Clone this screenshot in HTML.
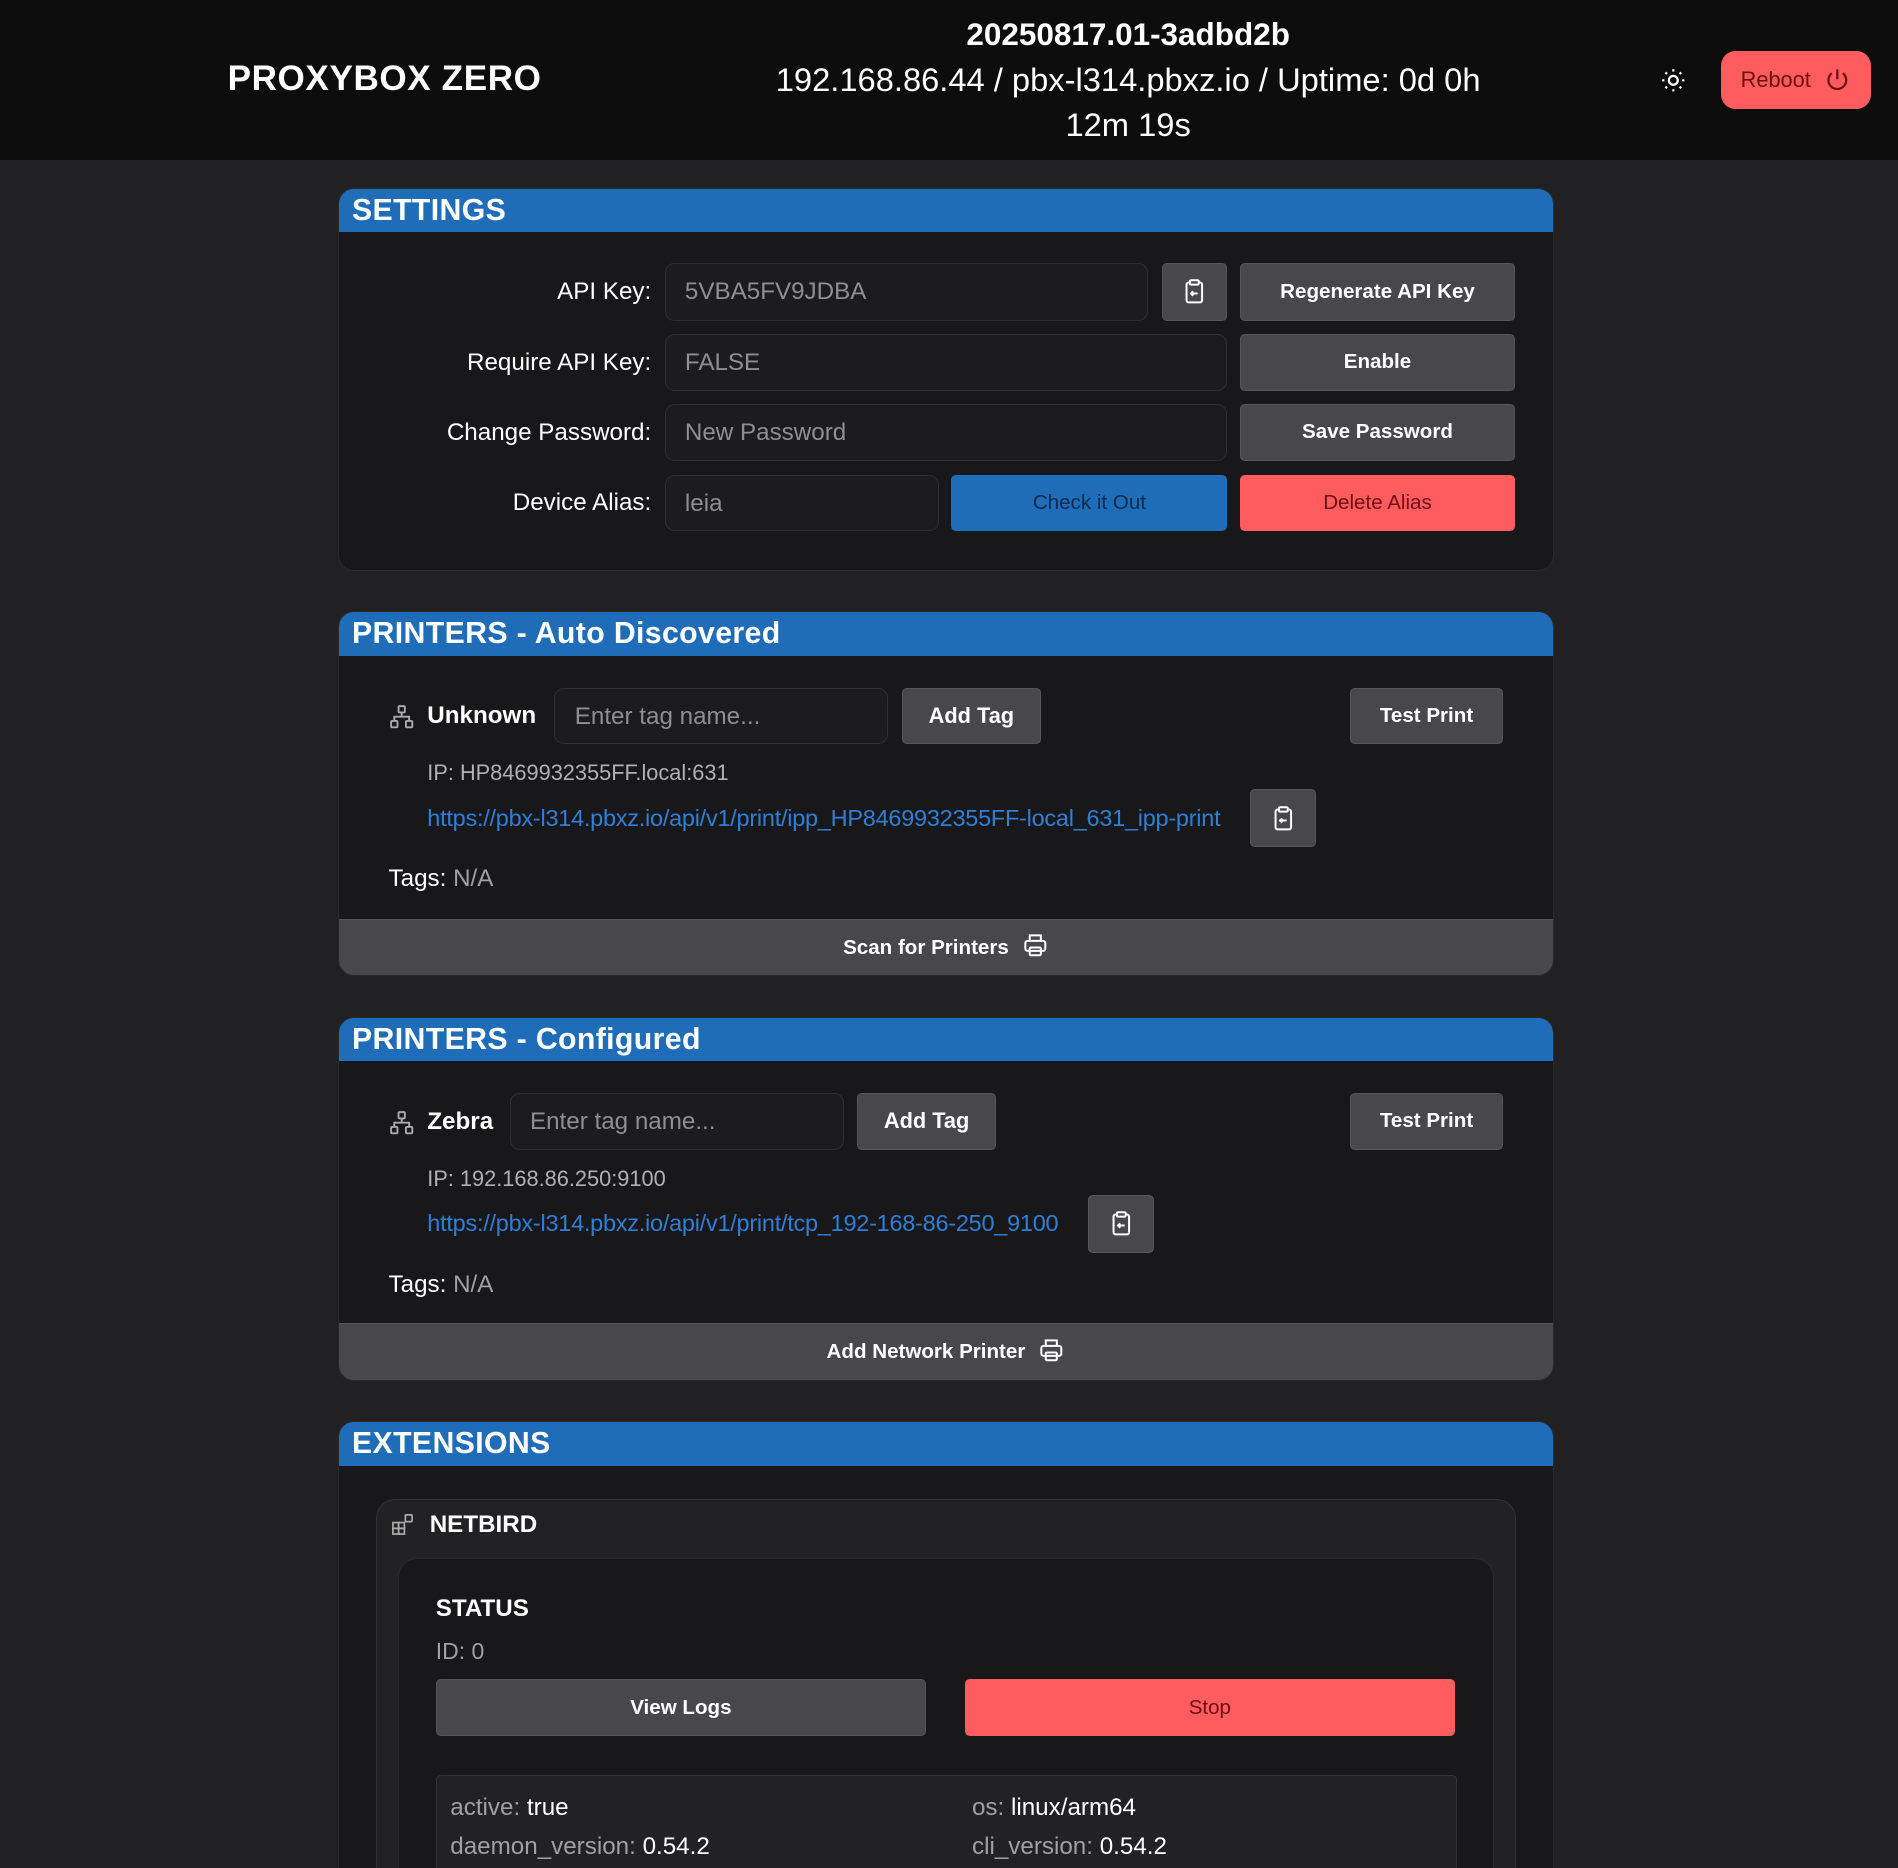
<!DOCTYPE html>
<html><head><meta charset="utf-8"><style>
html,body{margin:0;padding:0;background:#212123;width:1898px;height:1868px;overflow:hidden}
#w{zoom:1.21046;width:1568px;height:1543px;position:relative;font-family:"Liberation Sans",sans-serif;color:#fff}
.a{position:absolute}
.hdr{left:0;top:0;width:1568px;height:132px;background:#0d0d0d}
.c{text-align:center}
.card{left:279px;width:1003px;background:#18181a;border:1px solid #2a2a2d;border-radius:13px;overflow:hidden}
.ch{left:0;top:0;width:100%;height:36px;background:#1f6db8;font-weight:bold;font-size:25px;line-height:36px;padding-left:11px;box-sizing:border-box;letter-spacing:0.3px}
.lbl{font-size:20px;text-align:right;width:260px;left:278px}
.in{background:#1c1c1f;border:1px solid #2f2f33;border-radius:8px;box-sizing:border-box;font-size:20px;color:#8e8e93;padding-left:16px;line-height:46px}
.btn{background:#48484c;border:1px solid #56565a;border-radius:4px;box-sizing:border-box;font-size:17px;font-weight:bold;text-align:center;color:#fff}
.red{background:#ff5c5f;border-color:#ff5c5f;color:#6e0f12;font-weight:normal}
.blue{background:#1f6db8;border-color:#1f6db8;color:#0c2a4f;font-weight:normal}
.ip{font-size:18px;color:#b0b0b5}
.lnk{font-size:19.4px;color:#2f7fd6;letter-spacing:-0.2px}
.foot{left:0;width:100%;height:47px;background:#48484c;border-top:1px solid #56565a;font-size:17px;font-weight:bold;text-align:center;line-height:46px}
svg{vertical-align:middle}
</style></head><body><div id="w">
<div class="a hdr"></div>
<div class="a" style="left:188px;top:49px;font-size:29px;font-weight:bold;letter-spacing:0.5px">PROXYBOX ZERO</div>
<div class="a c" style="left:560px;width:744px;top:10px;font-size:27px;line-height:37px"><b style="font-size:26px">20250817.01-3adbd2b</b><br>192.168.86.44 / pbx-l314.pbxz.io / Uptime: 0d 0h<br>12m 19s</div>
<svg class="a" style="left:1371px;top:55px" width="22" height="22" viewBox="0 0 24 24" fill="none" stroke="#fff" stroke-width="2"><circle cx="12" cy="12" r="4"/><path d="M12 2v2M12 20v2M2 12h2M20 12h2M4.9 4.9l1.4 1.4M17.7 17.7l1.4 1.4M4.9 19.1l1.4-1.4M17.7 6.3l1.4-1.4"/></svg>
<div class="a" style="left:1422px;top:42px;width:124px;height:48px;background:#ff5c5f;border-radius:12px;color:#6e0f12;font-size:18px;line-height:48px;padding-left:16px;box-sizing:border-box">Reboot <svg width="22" height="22" viewBox="0 0 24 24" fill="none" stroke="#6e0f12" stroke-width="2" style="margin-left:6px;margin-top:-3px"><path d="M12 3v9"/><path d="M7 6.5a8 8 0 1 0 10 0"/></svg></div>

<!-- settings -->
<div class="a card" style="top:155px;height:315px">
<div class="a ch">SETTINGS</div></div>
<div class="a lbl" style="top:230px">API Key:</div>
<div class="a lbl" style="top:288px">Require API Key:</div>
<div class="a lbl" style="top:346px">Change Password:</div>
<div class="a lbl" style="top:404px">Device Alias:</div>
<div class="a in" style="left:549px;top:217px;width:399px;height:48px">5VBA5FV9JDBA</div>
<div class="a btn" style="left:960px;top:217px;width:54px;height:48px;padding-top:12px"><svg width="22" height="22" viewBox="0 0 24 24" fill="none" stroke="#fff" stroke-width="1.8"><rect x="8" y="2" width="8" height="4" rx="1"/><path d="M16 4h1a2 2 0 0 1 2 2v14a2 2 0 0 1-2 2H7a2 2 0 0 1-2-2V6a2 2 0 0 1 2-2h1"/><path d="M15 14H9m2-2l-2 2 2 2"/></svg></div>
<div class="a btn" style="left:1024px;top:217px;width:228px;height:48px;line-height:46px">Regenerate API Key</div>
<div class="a in" style="left:549px;top:276px;width:465px;height:47px">FALSE</div>
<div class="a btn" style="left:1024px;top:276px;width:228px;height:47px;line-height:45px">Enable</div>
<div class="a in" style="left:549px;top:334px;width:465px;height:47px">New Password</div>
<div class="a btn" style="left:1024px;top:334px;width:228px;height:47px;line-height:45px">Save Password</div>
<div class="a in" style="left:549px;top:392px;width:227px;height:47px">leia</div>
<div class="a btn blue" style="left:786px;top:392px;width:228px;height:47px;line-height:45px">Check it Out</div>
<div class="a btn red" style="left:1024px;top:392px;width:228px;height:47px;line-height:45px">Delete Alias</div>

<!-- printers auto -->
<div class="a card" style="top:505px;height:300px">
<div class="a ch">PRINTERS - Auto Discovered</div>
<div class="a foot" style="top:253px">Scan for Printers <svg width="22" height="22" viewBox="0 0 24 24" fill="none" stroke="#fff" stroke-width="1.8" style="margin-left:6px;margin-top:-4px"><path d="M7 8V3h10v5"/><rect x="3" y="8" width="18" height="9" rx="2"/><rect x="7" y="14" width="10" height="7" rx="1"/></svg></div></div>
<svg class="a" style="left:321px;top:582px" width="21" height="21" viewBox="0 0 24 24" fill="none" stroke="#aaa" stroke-width="1.8"><rect x="9" y="2" width="6" height="6" rx="1"/><rect x="2" y="16" width="6" height="6" rx="1"/><rect x="16" y="16" width="6" height="6" rx="1"/><path d="M12 8v4M5 16v-4h14v4"/></svg>
<div class="a" style="left:353px;top:580px;font-size:20px;font-weight:bold">Unknown</div>
<div class="a in" style="left:458px;top:568px;width:276px;height:47px">Enter tag name...</div>
<div class="a btn" style="left:745px;top:568px;width:115px;height:47px;line-height:45px;font-size:18px">Add Tag</div>
<div class="a btn" style="left:1115px;top:568px;width:127px;height:47px;line-height:45px">Test Print</div>
<div class="a ip" style="left:353px;top:628px">IP: HP8469932355FF.local:631</div>
<div class="a lnk" style="left:353px;top:665px">https://pbx-l314.pbxz.io/api/v1/print/ipp_HP8469932355FF-local_631_ipp-print</div>
<div class="a btn" style="left:1033px;top:652px;width:54px;height:48px;padding-top:12px"><svg width="22" height="22" viewBox="0 0 24 24" fill="none" stroke="#fff" stroke-width="1.8"><rect x="8" y="2" width="8" height="4" rx="1"/><path d="M16 4h1a2 2 0 0 1 2 2v14a2 2 0 0 1-2 2H7a2 2 0 0 1-2-2V6a2 2 0 0 1 2-2h1"/><path d="M15 14H9m2-2l-2 2 2 2"/></svg></div>
<div class="a" style="left:321px;top:715px;font-size:20px">Tags: <span style="color:#a0a0a5">N/A</span></div>

<!-- printers configured -->
<div class="a card" style="top:840px;height:299px">
<div class="a ch">PRINTERS - Configured</div>
<div class="a foot" style="top:252px">Add Network Printer <svg width="22" height="22" viewBox="0 0 24 24" fill="none" stroke="#fff" stroke-width="1.8" style="margin-left:6px;margin-top:-4px"><path d="M7 8V3h10v5"/><rect x="3" y="8" width="18" height="9" rx="2"/><rect x="7" y="14" width="10" height="7" rx="1"/></svg></div></div>
<svg class="a" style="left:321px;top:917px" width="21" height="21" viewBox="0 0 24 24" fill="none" stroke="#aaa" stroke-width="1.8"><rect x="9" y="2" width="6" height="6" rx="1"/><rect x="2" y="16" width="6" height="6" rx="1"/><rect x="16" y="16" width="6" height="6" rx="1"/><path d="M12 8v4M5 16v-4h14v4"/></svg>
<div class="a" style="left:353px;top:915px;font-size:20px;font-weight:bold">Zebra</div>
<div class="a in" style="left:421px;top:903px;width:276px;height:47px">Enter tag name...</div>
<div class="a btn" style="left:708px;top:903px;width:115px;height:47px;line-height:45px;font-size:18px">Add Tag</div>
<div class="a btn" style="left:1115px;top:903px;width:127px;height:47px;line-height:45px">Test Print</div>
<div class="a ip" style="left:353px;top:963px">IP: 192.168.86.250:9100</div>
<div class="a lnk" style="left:353px;top:1000px">https://pbx-l314.pbxz.io/api/v1/print/tcp_192-168-86-250_9100</div>
<div class="a btn" style="left:899px;top:987px;width:54px;height:48px;padding-top:12px"><svg width="22" height="22" viewBox="0 0 24 24" fill="none" stroke="#fff" stroke-width="1.8"><rect x="8" y="2" width="8" height="4" rx="1"/><path d="M16 4h1a2 2 0 0 1 2 2v14a2 2 0 0 1-2 2H7a2 2 0 0 1-2-2V6a2 2 0 0 1 2-2h1"/><path d="M15 14H9m2-2l-2 2 2 2"/></svg></div>
<div class="a" style="left:321px;top:1050px;font-size:20px">Tags: <span style="color:#a0a0a5">N/A</span></div>

<!-- extensions -->
<div class="a card" style="top:1174px;height:420px">
<div class="a ch">EXTENSIONS</div></div>
<div class="a" style="left:311px;top:1238px;width:940px;height:340px;background:#222224;border:1px solid #333336;border-radius:16px"></div>
<svg class="a" style="left:323px;top:1250px" width="19" height="19" viewBox="0 0 24 24" fill="none" stroke="#aaa" stroke-width="1.8"><rect x="2" y="10" width="6" height="6"/><rect x="2" y="16" width="6" height="6"/><rect x="8" y="16" width="6" height="6"/><rect x="8" y="10" width="6" height="6"/><rect x="15" y="2" width="7" height="7" rx="1"/></svg>
<div class="a" style="left:355px;top:1248px;font-size:20px;font-weight:bold">NETBIRD</div>
<div class="a" style="left:329px;top:1287px;width:904px;height:300px;background:#18181a;border:1px solid #2a2a2d;border-radius:16px"></div>
<div class="a" style="left:360px;top:1318px;font-size:20px;font-weight:bold">STATUS</div>
<div class="a" style="left:360px;top:1353px;font-size:19px;color:#a0a0a5">ID: 0</div>
<div class="a btn" style="left:360px;top:1387px;width:405px;height:47px;line-height:46px">View Logs</div>
<div class="a btn red" style="left:797px;top:1387px;width:405px;height:47px;line-height:46px">Stop</div>
<div class="a" style="left:360px;top:1466px;width:842px;height:100px;background:#222224;border:1px solid #333336;border-radius:4px"></div>
<div class="a" style="left:372px;top:1482px;font-size:20px;color:#a0a0a5">active: <span style="color:#fff">true</span></div>
<div class="a" style="left:803px;top:1482px;font-size:20px;color:#a0a0a5">os: <span style="color:#fff">linux/arm64</span></div>
<div class="a" style="left:372px;top:1514px;font-size:20px;color:#a0a0a5">daemon_version: <span style="color:#fff">0.54.2</span></div>
<div class="a" style="left:803px;top:1514px;font-size:20px;color:#a0a0a5">cli_version: <span style="color:#fff">0.54.2</span></div>
</div></body></html>
